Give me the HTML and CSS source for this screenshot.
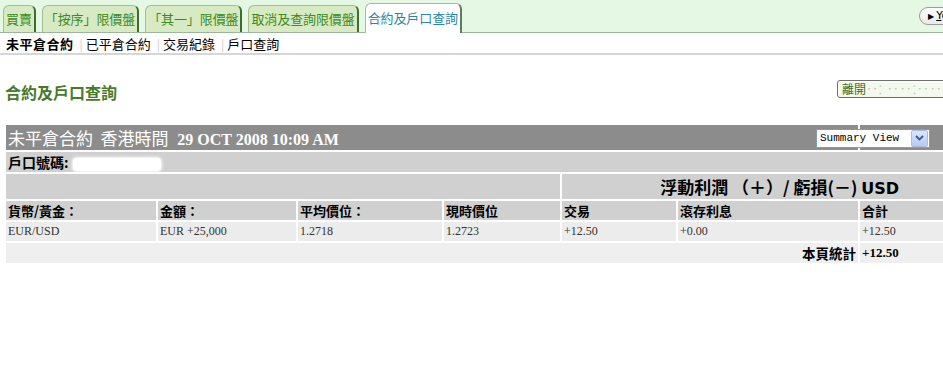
FILE: index.html
```html
<!DOCTYPE html>
<html lang="zh-Hant">
<head>
<meta charset="utf-8">
<title>合約及戶口查詢</title>
<link rel="stylesheet" href="styles.css">
</head>
<body>
  <div class="page">
    <div class="tabbar">
      <a class="tab">買賣</a>
      <a class="tab">「按序」限價盤</a>
      <a class="tab">「其一」限價盤</a>
      <a class="tab">取消及查詢限價盤</a>
      <a class="tab active">合約及戶口查詢</a>
      <span class="pill"><span class="pill-arrow">&#9654;</span><u>Y</u>ou</span>
    </div>
    <div class="subnav">
      <span class="sub current">未平倉合約</span>
      <span class="sep">|</span><span class="sub">已平倉合約</span>
      <span class="sep">|</span><span class="sub">交易紀錄</span>
      <span class="sep">|</span><span class="sub">戶口查詢</span>
    </div>

    <div class="titlebar">
      <h1 class="title">合約及戶口查詢</h1>
      <span class="leave-btn">離開<span class="faint">‥⁚ ‥‥⁚‥‥‥</span></span>
    </div>

    <table class="grid">
      <tr class="head">
        <td colspan="6"><span class="head-label">未平倉合約 &nbsp;香港時間</span> <span class="head-date">29 OCT 2008 10:09 AM</span></td>
        <td class="sel-cell">
          <span class="select">Summary View<span class="sel-btn"><svg width="9" height="6" viewBox="0 0 9 6"><path d="M1 1 L4.5 4.5 L8 1" fill="none" stroke="#3a5a9a" stroke-width="1.8"/></svg></span></span>
        </td>
      </tr>
      <tr class="band">
        <td colspan="7"><b>戶口號碼:</b><span class="redact"></span></td>
      </tr>
      <tr class="band tall">
        <td colspan="4"></td>
        <td colspan="3" class="pl">浮動利潤 （＋）/ 虧損(－) <span class="usd">USD</span></td>
      </tr>
      <tr class="cols">
        <td class="c1">貨幣/黃金：</td>
        <td class="c2">金額：</td>
        <td class="c3">平均價位：</td>
        <td class="c4">現時價位</td>
        <td class="c5">交易</td>
        <td class="c6">滾存利息</td>
        <td class="c7">合計</td>
      </tr>
      <tr class="data">
        <td>EUR/USD</td>
        <td>EUR +25,000</td>
        <td>1.2718</td>
        <td>1.2723</td>
        <td>+12.50</td>
        <td>+0.00</td>
        <td>+12.50</td>
      </tr>
      <tr class="total">
        <td colspan="6" class="total-label">本頁統計</td>
        <td class="total-val">+12.50</td>
      </tr>
    </table>
  </div>
</body>
</html>
```

FILE: styles.css
```css
body { margin:0; background:#fff; overflow:hidden; font-family:"Noto Sans CJK TC", sans-serif; color:#000; }
.page { width:975px; }

/* top tabs */
.tabbar {
  display:flex; align-items:flex-end; gap:6px;
  height:33px; padding-left:3px; box-sizing:border-box;
  background:#e5f8e3; border-bottom:1px solid #9bb79b;
}
.tab {
  display:block; height:27px; box-sizing:border-box;
  padding:3px 2px 0 2px; font-size:13px; line-height:20px;
  color:#3e8a1e; background:#d7eac4;
  border:1px solid #a5bf95; border-right:2px solid #3f6e2c; border-bottom:none;
  border-radius:6px 6px 0 0; white-space:nowrap; letter-spacing:-0.1px;
}
.tab.active {
  height:30px; margin-bottom:-1px; padding-top:4px;
  background:#fff; color:#2a86a6;
  border-color:#a9b7a9; border-right-color:#5f7c5f;
}
.pill {
  margin-left:auto; align-self:center; margin-right:6px;
  width:50px; box-sizing:border-box; overflow:hidden; white-space:nowrap;
  height:18px; padding:0 8px; border:1px solid #9a9a9a; border-radius:9px;
  background:linear-gradient(#fff, #e9e9e9); font:11px "DejaVu Sans", sans-serif; line-height:16px;
}
.pill-arrow { font-size:8px; margin-right:2px; }

.subnav {
  display:flex; align-items:center; height:20px; padding-left:6px;
  font-size:13px; border-bottom:2px solid #d6d6d6;
}
.sub.current { font-weight:bold; letter-spacing:0.5px; }
.sep { color:#c9c9c9; margin:0 3px 0 6px; font-size:12px; }

/* page title */
.titlebar { display:flex; justify-content:space-between; align-items:flex-start; margin-top:25px; }
.title { margin:0 0 0 5px; padding-top:2px; font-size:16px; line-height:20px; color:#477a28; font-weight:bold; }
.leave-btn {
  margin-right:28px; padding:0 4px; height:16px; width:100px;
  border:1px solid #6e6e6e; border-radius:3px; background:#f3f9ec;
  font-size:12px; line-height:16px; color:#3c6e2a; white-space:nowrap; overflow:hidden;
  box-shadow:inset 1px 1px 0 #fff;
}
.faint { color:#b9b9b9; letter-spacing:1px; }

/* results table */
.grid {
  margin:21px 0 0 4px; width:970px; border-collapse:separate; border-spacing:2px;
  font-size:12px;
}
.grid td { padding:0 2px; white-space:nowrap; }
.head td { background:#8c8c8c; height:22px; color:#fff; }
.head-label { font-size:17px; }
.head-date { font:bold 16px "Liberation Serif", serif; margin-left:6px; }
.head .sel-cell { text-align:left; padding-left:0; }
.select {
  display:inline-flex; align-items:center; justify-content:space-between;
  width:114px; height:19px; box-sizing:border-box; margin-left:-44px;
  background:#fff; border:1px solid #7f9db9; padding-left:3px;
  font:11px "Liberation Mono", monospace; color:#000; vertical-align:middle;
}
.sel-btn {
  display:flex; align-items:center; justify-content:center;
  width:15px; height:15px; margin-right:1px;
  background:linear-gradient(#dde7fb, #b7c9f0); border:1px solid #a8bce6; border-radius:2px;
}
.band td { background:#d0d0d0; height:20px; }
.band b { font-size:14px; }
.redact {
  display:inline-block; width:88px; height:13px; margin-left:4px; vertical-align:middle;
  background:#fff; border-radius:4px; box-shadow:0 0 3px 1px #fff;
}
.band.tall td { height:21px; }
.pl { text-align:right; font-size:17px; font-weight:bold; padding-right:73px !important; }
.usd { font-family:"DejaVu Sans", sans-serif; font-size:16px; }
.cols td { background:#d0d0d0; height:18px; font-weight:bold; font-size:13px; }
.c1 { width:146px; }
.c2 { width:134px; }
.c3 { width:140px; }
.c4 { width:112px; }
.c5 { width:110px; }
.c6 { width:176px; }
.data td { background:#ececec; height:19px; font:12px "Liberation Serif", serif; color:#333; }
.total td { background:#efefef; height:19px; font-weight:bold; }
.total-label { text-align:right; font-size:13.5px; }
.total-val { font:bold 13px "Liberation Serif", serif; }
```
